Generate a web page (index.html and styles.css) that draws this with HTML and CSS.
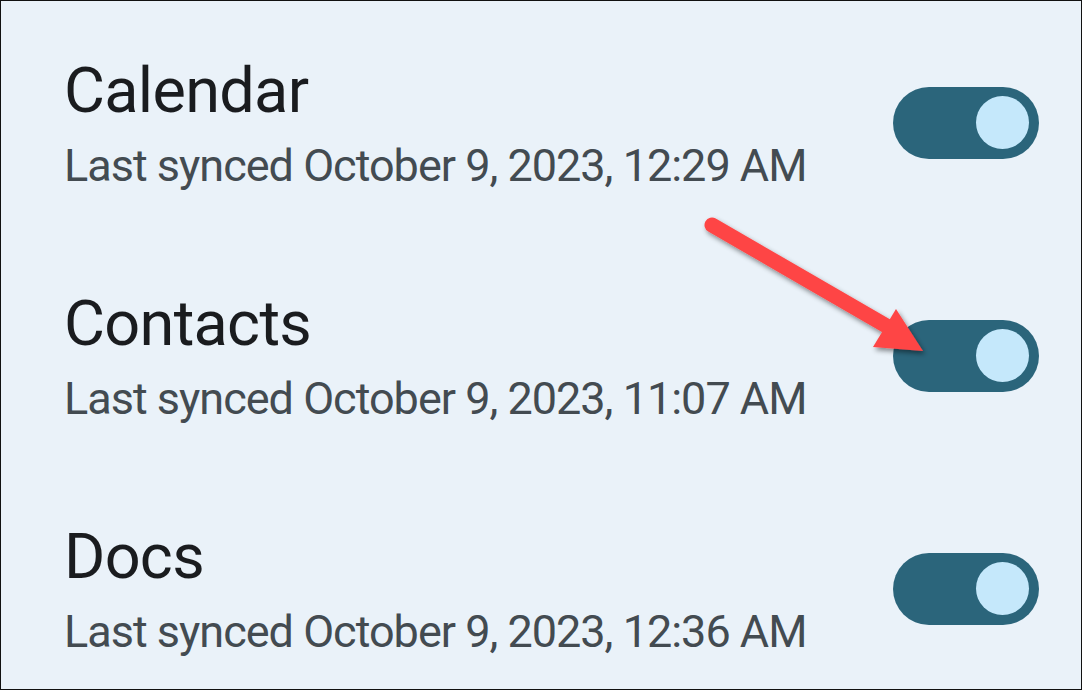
FILE: index.html
```html
<!DOCTYPE html>
<html>
<head>
<meta charset="utf-8">
<link rel="stylesheet" href="styles.css">
</head>
<body>
<div class="screen">
  <div class="row">
    <div class="text">
      <div class="title">Calendar</div>
      <div class="sub">Last synced October 9, 2023, 12:29 AM</div>
    </div>
    <div class="toggle"><span class="knob"></span></div>
  </div>
  <div class="row">
    <div class="text">
      <div class="title">Contacts</div>
      <div class="sub">Last synced October 9, 2023, 11:07 AM</div>
    </div>
    <div class="toggle"><span class="knob"></span></div>
  </div>
  <div class="row">
    <div class="text">
      <div class="title">Docs</div>
      <div class="sub">Last synced October 9, 2023, 12:36 AM</div>
    </div>
    <div class="toggle"><span class="knob"></span></div>
  </div>
  <svg class="arrow" width="1082" height="690" viewBox="0 0 1082 690">
    <defs>
      <filter id="sh" x="-20%" y="-20%" width="140%" height="140%">
        <feDropShadow dx="2" dy="3" stdDeviation="2.5" flood-color="#000" flood-opacity="0.45"/>
      </filter>
    </defs>
    <g filter="url(#sh)">
      <line x1="712" y1="225" x2="890" y2="328" stroke="#fe4545" stroke-width="15" stroke-linecap="round"/>
      <polygon points="923,351 896,309 873,347" fill="#fe4545"/>
    </g>
  </svg>
</div>
</body>
</html>
```
FILE: styles.css
```css
html, body {
  margin: 0;
  padding: 0;
}
body {
  font-family: Roboto, "Noto Sans", sans-serif;
}
.screen {
  position: relative;
  width: 1082px;
  height: 690px;
  box-sizing: border-box;
  border: 1px solid #111;
  background: #eaf2f9;
  padding-top: 5px;
  overflow: hidden;
}
.row {
  height: 233px;
  display: flex;
  align-items: center;
  justify-content: space-between;
  padding: 0 42px 0 63px;
}
.title {
  font-size: 63px;
  line-height: 74px;
  letter-spacing: -0.7px;
  color: #1a1c1f;
}
.sub {
  margin-top: 12px;
  font-size: 45px;
  line-height: 52px;
  letter-spacing: -1px;
  color: #434b51;
}
.toggle {
  width: 146px;
  height: 72px;
  border-radius: 36px;
  background: #2b657b;
  display: flex;
  align-items: center;
  justify-content: flex-end;
  padding-right: 10px;
  box-sizing: border-box;
}
.knob {
  width: 53px;
  height: 53px;
  border-radius: 50%;
  background: #c5e8fb;
}
.arrow {
  position: absolute;
  left: -1px;
  top: -1px;
}
```
